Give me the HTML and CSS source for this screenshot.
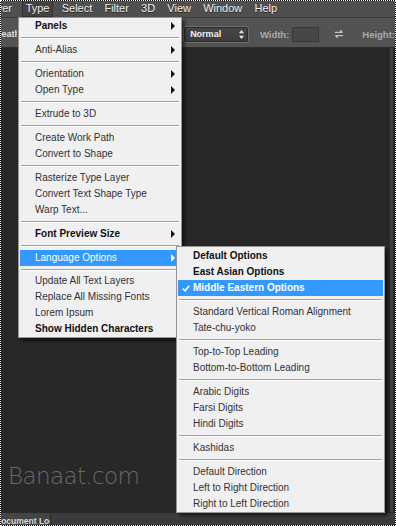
FILE: index.html
```html
<!DOCTYPE html>
<html lang="en">
<head>
<meta charset="UTF-8" />
<meta name="viewport" content="width=device-width, initial-scale=1.0">
<title>Type menu</title>
<link rel="stylesheet" href="styles.css">
</head>
<body>
<div class="screen">
  <nav class="menubar">
    <span class="mb-item first">Layer</span>
    <span class="mb-item active">Type</span>
    <span class="mb-item">Select</span>
    <span class="mb-item">Filter</span>
    <span class="mb-item">3D</span>
    <span class="mb-item">View</span>
    <span class="mb-item">Window</span>
    <span class="mb-item">Help</span>
  </nav>

  <div class="optionsbar">
    <span class="feather">Feath</span>
    <div class="dropdown">
      <span>Normal</span>
      <svg width="5" height="9" viewBox="0 0 5 9"><path d="M2.5 0L5 3.2H0zM2.5 9L5 5.8H0z" fill="#e6e6e6"/></svg>
    </div>
    <span class="label">Width:</span>
    <span class="field"></span>
    <svg class="swap" width="11" height="10" viewBox="0 0 11 10"><path d="M1 3.2h8.5M6.8 0.8l2.7 2.4M10 6.8H1.5M4.2 9.2L1.5 6.8" stroke="#c4c4c4" stroke-width="1.4" fill="none"/></svg>
    <span class="label">Height:</span>
  </div>

  <div class="workspace">
    <div class="canvas">
      <span class="watermark">Banaat.com</span>
    </div>
    <div class="dock-edge"></div>
  </div>

  <div class="panelbar">
    <span class="tab">Document Log</span>
  </div>

  <ul class="menu main-menu">
    <li class="bold sub">Panels</li>
    <li class="sep"></li>
    <li class="sub">Anti-Alias</li>
    <li class="sep"></li>
    <li class="sub">Orientation</li>
    <li class="sub">Open Type</li>
    <li class="sep"></li>
    <li>Extrude to 3D</li>
    <li class="sep"></li>
    <li>Create Work Path</li>
    <li>Convert to Shape</li>
    <li class="sep"></li>
    <li>Rasterize Type Layer</li>
    <li>Convert Text Shape Type</li>
    <li>Warp Text...</li>
    <li class="sep"></li>
    <li class="bold sub">Font Preview Size</li>
    <li class="sep"></li>
    <li class="sub hl">Language Options</li>
    <li class="sep short"></li>
    <li>Update All Text Layers</li>
    <li>Replace All Missing Fonts</li>
    <li>Lorem Ipsum</li>
    <li class="bold">Show Hidden Characters</li>
  </ul>

  <ul class="menu sub-menu">
    <li class="bold">Default Options</li>
    <li class="bold">East Asian Options</li>
    <li class="bold hl checked">
      <svg class="check" width="8" height="7" viewBox="0 0 8 7"><path d="M0.8 3.6L3 5.8L7.2 0.8" stroke="#fff" stroke-width="1.6" fill="none"/></svg>
      Middle Eastern Options
    </li>
    <li class="sep"></li>
    <li>Standard Vertical Roman Alignment</li>
    <li>Tate-chu-yoko</li>
    <li class="sep"></li>
    <li>Top-to-Top Leading</li>
    <li>Bottom-to-Bottom Leading</li>
    <li class="sep"></li>
    <li>Arabic Digits</li>
    <li>Farsi Digits</li>
    <li>Hindi Digits</li>
    <li class="sep"></li>
    <li>Kashidas</li>
    <li class="sep"></li>
    <li>Default Direction</li>
    <li>Left to Right Direction</li>
    <li>Right to Left Direction</li>
  </ul>
</div>
</body>
</html>
```

FILE: styles.css
```css
* {
  box-sizing: border-box;
}

body {
  margin: 0;
  background: #000;
  font-family: "Liberation Sans", Arial, sans-serif;
}

.screen {
  position: relative;
  width: 396px;
  height: 526px;
  border: 1px dotted #fff;
  background: #000;
  display: flex;
  flex-direction: column;
  overflow: hidden;
}

/* top menu bar */
.menubar {
  height: 16px;
  flex-shrink: 0;
  display: flex;
  background: #4f4f4f;
  font-size: 11px;
  line-height: 15px;
  color: #ececec;
  text-shadow: 0 1px 0 #2a2a2a;
  white-space: nowrap;
}

.mb-item {
  margin: 0 2.6px;
  padding: 0 3.5px;
}

.mb-item.first {
  margin-left: -20px;
  margin-right: 4px;
}

.mb-item.active {
  background: #434343;
  border: 1px solid #323232;
  border-top: 0;
  padding: 0 2.5px;
}

/* tool options bar */
.optionsbar {
  height: 31px;
  flex-shrink: 0;
  display: flex;
  align-items: center;
  padding-top: 3px;
  background: #535353;
  border-top: 1px solid #383838;
  border-bottom: 1px solid #2c2c2c;
  white-space: nowrap;
}

.feather {
  width: 18px;
  overflow: hidden;
  text-indent: -5px;
  font-size: 9px;
  font-weight: bold;
  color: #e0e0e0;
}

.dropdown {
  margin-left: 166px;
  width: 72px;
  height: 17px;
  display: flex;
  align-items: center;
  justify-content: space-between;
  padding: 0 4px 0 6px;
  border: 1px solid #6e6e6e;
  border-radius: 3px;
  background: linear-gradient(#474747, #3b3b3b);
  box-shadow: inset 0 0 0 1px #2c2c2c;
  font-size: 9px;
  font-weight: bold;
  color: #f0f0f0;
}

.label {
  font-size: 9.5px;
  font-weight: bold;
  color: #a9a9a9;
}

.dropdown + .label {
  margin-left: 11px;
}

.field {
  width: 30px;
  height: 15px;
  margin-left: 3px;
  background: #474747;
  border: 1px solid #363636;
}

.swap {
  margin: 0 18px 0 15px;
}

/* document area */
.workspace {
  flex: 1;
  display: flex;
  background: #282828;
}

.canvas {
  flex: 1;
  display: flex;
  align-items: flex-end;
  padding: 0 0 23px 7px;
}

.watermark {
  font-family: "DejaVu Sans", sans-serif;
  font-weight: 200;
  font-size: 23px;
  letter-spacing: -0.6px;
  color: #6a6a6a;
}

.dock-edge {
  width: 5px;
  border-left: 3px solid #414141;
  background: #262626;
}

.panelbar {
  height: 13px;
  flex-shrink: 0;
  display: flex;
  background: #3b3b3b;
  border-top: 1px solid #2a2a2a;
  overflow: hidden;
}

.tab {
  width: 50px;
  padding-top: 3px;
  overflow: hidden;
  white-space: nowrap;
  text-indent: -6px;
  background: #444;
  border-right: 1px solid #2a2a2a;
  font-size: 8.5px;
  font-weight: bold;
  color: #d8d8d8;
}

/* drop-down menus */
.menu {
  position: absolute;
  margin: 0;
  padding: 0;
  list-style: none;
  background: #f0f0f0;
  border: 1px solid #979797;
  box-shadow: 3px 3px 3px rgba(0, 0, 0, 0.5);
  font-size: 10px;
  color: #303036;
  white-space: nowrap;
}

.menu li {
  position: relative;
  height: 16px;
  line-height: 16px;
  margin: 0 1px;
  padding-left: 15px;
}

.menu li.bold {
  font-weight: bold;
  color: #111114;
}

.menu li.sep {
  height: 8px;
  margin: 0 2px;
  padding: 0;
  background: linear-gradient(transparent 3px, #a2a2a2 3px, #a2a2a2 4px, #fff 4px, #fff 5px, transparent 5px);
}

.menu li.sep.short {
  height: 7px;
}

.menu li.sub::after {
  content: "";
  position: absolute;
  right: 5px;
  top: 4px;
  border-top: 4px solid transparent;
  border-bottom: 4px solid transparent;
  border-left: 4px solid #141414;
}

.menu li.hl {
  background: #3399ff;
  color: #fff;
}

.menu li.hl.sub::after {
  border-left-color: #fff;
}

.check {
  position: absolute;
  left: 4px;
  top: 5px;
}

.main-menu {
  left: 17px;
  top: 16px;
  width: 164px;
}

.sub-menu {
  left: 175px;
  top: 245px;
  width: 209px;
  padding-top: 1px;
}
```
